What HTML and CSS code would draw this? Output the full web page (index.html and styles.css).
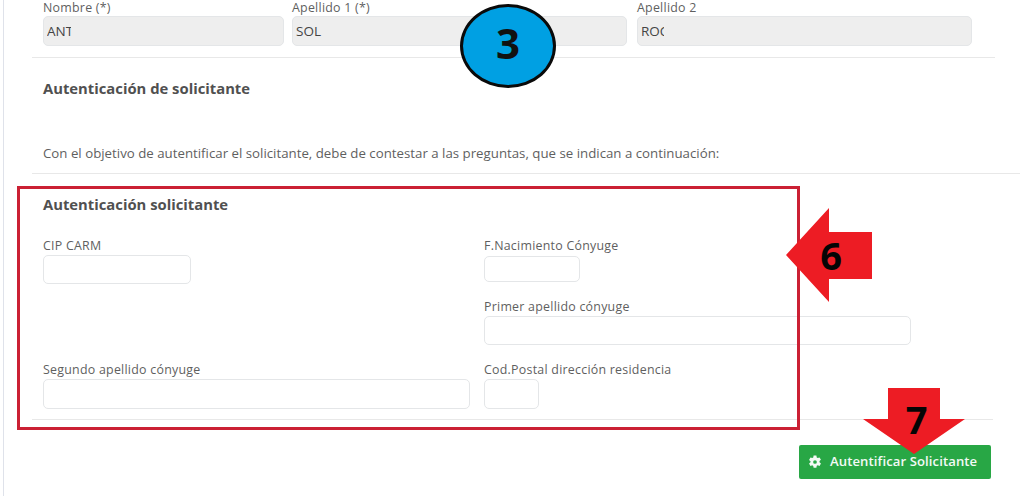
FILE: index.html
```html
<!DOCTYPE html>
<html lang="es">
<head>
<meta charset="utf-8">
<title>Autenticación de solicitante</title>
<link rel="stylesheet" href="styles.css">
</head>
<body>
<main class="page">
  <section class="identity">
    <div class="field">
      <label class="label">Nombre (*)</label>
      <div class="input readonly"><span class="clip clip-ant">ANT</span></div>
    </div>
    <div class="field">
      <label class="label">Apellido 1 (*)</label>
      <div class="input readonly"><span>SOL</span></div>
    </div>
    <div class="field field-last">
      <label class="label">Apellido 2</label>
      <div class="input readonly"><span class="clip clip-roc">ROC</span></div>
    </div>
  </section>
  <hr class="rule rule-a">
  <h2 class="heading heading-a">Autenticación de solicitante</h2>
  <p class="intro">Con el objetivo de autentificar el solicitante, debe de contestar a las preguntas, que se indican a continuación:</p>
  <hr class="rule rule-b">
  <h2 class="heading heading-b">Autenticación solicitante</h2>
  <section class="auth">
    <div class="field">
      <label class="label">CIP CARM</label>
      <div class="input w-cip"></div>
    </div>
    <div class="auth-right">
      <div class="field">
        <label class="label">F.Nacimiento Cónyuge</label>
        <div class="input w-date"></div>
      </div>
      <div class="field">
        <label class="label">Primer apellido cónyuge</label>
        <div class="input w-first"></div>
      </div>
    </div>
    <div class="field field-low">
      <label class="label">Segundo apellido cónyuge</label>
      <div class="input w-second"></div>
    </div>
    <div class="field field-low">
      <label class="label">Cod.Postal dirección residencia</label>
      <div class="input w-zip"></div>
    </div>
  </section>
  <hr class="rule rule-c">
  <div class="actions">
    <button class="submit" type="button">
      <svg class="cog" viewBox="0 0 24 24" aria-hidden="true"><path fill-rule="evenodd" d="M9.600 1h4.800l.6 3.200 1.700 1 3.100-1.100 2.400 4.200-2.500 2.100v2l2.500 2.100-2.400 4.200-3.100-1.100-1.700 1-.6 3.200H9.600L9 18.700l-1.700-1-3.100 1.100-2.400-4.200 2.500-2.100v-2L1.800 8.400l2.400-4.200 3.100 1.100 1.700-1zM12 8.800a3.200 3.200 0 1 0 0 6.400 3.200 3.200 0 0 0 0-6.400z"/></svg>
      Autentificar Solicitante
    </button>
  </div>

  <div class="callout-box"></div>
  <div class="badge"><span>3</span></div>
  <div class="arrow arrow-six">
    <svg viewBox="0 0 86 94" aria-hidden="true"><path d="M0 47 43 0V24H86V71H43V94Z"/></svg>
    <span>6</span>
  </div>
  <div class="arrow arrow-seven">
    <svg viewBox="0 0 102 66" aria-hidden="true"><path d="M25 0H77V31H102L51 66 0 31H25Z"/></svg>
    <span>7</span>
  </div>
</main>
</body>
</html>
```
FILE: styles.css
```css
* { box-sizing: border-box; }
html, body { margin: 0; height: 100%; background: #fff; overflow: hidden; }
body { font-family: "Open Sans", "Noto Sans", sans-serif; color: #5a5a5a; }

.page {
  position: relative;
  width: 1024px;
  height: 496px;
  padding-left: 32px;
  background: linear-gradient(#dfe2ea, #dfe2ea) 3px 0 / 1px 100% no-repeat;
}

.label {
  display: block;
  font-size: 12.4px;
  line-height: 16px;
  height: 16px;
  letter-spacing: .25px;
  color: #5f5f5f;
}

.input {
  border: 1px solid #e4e6e8;
  border-radius: 5px;
  background: #fff;
}

.readonly {
  height: 30px;
  background: #eeeeee;
  padding: 0 3px;
  font-size: 13.5px;
  line-height: 29px;
  color: #444;
}

.clip { display: inline-block; overflow: hidden; vertical-align: top; white-space: nowrap; }
.clip-ant { width: 24px; }
.clip-roc { width: 23px; }

.identity {
  display: grid;
  grid-template-columns: 241px 335px 337px;
  column-gap: 8px;
  margin-left: 11px;
}
.field-last { padding-left: 2px; }

.rule { border: 0; border-top: 1px solid #e8e8e8; margin: 0; }
.rule-a { margin-top: 11px; width: 963px; }
.rule-b { margin-top: 10px; width: 988px; }
.rule-c { margin-top: 10px; width: 961px; }

.heading { margin: 0 0 0 11px; font-size: 14.8px; line-height: 20px; font-weight: 700; color: #505050; }
.heading-a { margin-top: 20px; }
.heading-b { margin-top: 20px; }

.intro { margin: 45px 0 0 11px; font-size: 13.28px; line-height: 20px; color: #5f5f5f; }

.auth {
  display: grid;
  grid-template-columns: 427px 426px;
  column-gap: 14px;
  margin: 24px 0 0 11px;
  align-items: start;
}
.auth .input { margin-top: 1px; }
.auth-right { display: flex; flex-direction: column; gap: 17px; }
.auth-right .w-date { margin-top: 2px; }
.field-low { margin-top: 17px; }

.w-cip { width: 148px; height: 29px; }
.w-date { width: 96px; height: 26px; }
.w-first { width: 427px; height: 29px; }
.w-second { width: 427px; height: 30px; }
.w-zip { width: 55px; height: 30px; }

.actions { display: flex; margin: 25px 0 0 767px; }
.submit {
  display: flex;
  align-items: center;
  gap: 8px;
  width: 192px;
  height: 34px;
  padding: 0 0 0 9px;
  border: 0;
  border-radius: 2px;
  background: #28a745;
  color: #f3faf5;
  font: 600 13.1px/1 "Open Sans", "Noto Sans", sans-serif;
  letter-spacing: .1px;
  white-space: nowrap;
}
.cog { width: 14px; height: 14px; fill: #f3faf5; flex: none; }

/* annotations layered over the screenshot */
.callout-box {
  position: absolute;
  left: 17px;
  top: 186px;
  width: 783px;
  height: 244px;
  border: 3px solid #cb2034;
}

.badge {
  position: absolute;
  left: 460px;
  top: 4px;
  width: 96px;
  height: 84px;
  border: 3px solid #0a0a0a;
  border-radius: 50%;
  background: #00a0e3;
  display: flex;
  align-items: center;
  justify-content: center;
  font: 700 42px/1 "Open Sans", sans-serif;
  color: #111;
}
.badge span { margin-top: -7px; }

.arrow { position: absolute; display: flex; align-items: center; justify-content: center; color: #050505; font: 700 38px/1 "Open Sans", sans-serif; }
.arrow svg { position: absolute; inset: 0; width: 100%; height: 100%; fill: #ed1c24; }
.arrow span { position: relative; }
.arrow-six { left: 786px; top: 208px; width: 86px; height: 94px; }
.arrow-six span { margin-left: 4px; }
.arrow-seven { left: 863px; top: 388px; width: 102px; height: 66px; }
.arrow-seven span { margin: -5px 0 0 5px; }
```
